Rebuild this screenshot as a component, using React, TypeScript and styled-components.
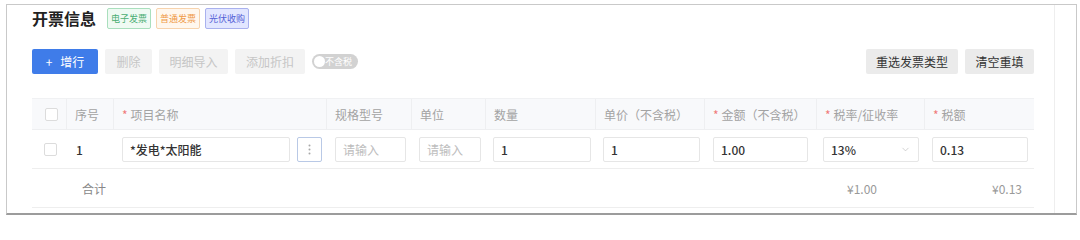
import React from "react";
import styled, { createGlobalStyle } from "styled-components";
import { ChevronDown } from "lucide-react";

const GlobalStyle = createGlobalStyle`
  html, body {
    margin: 0;
    padding: 0;
    background: #ffffff;
  }
  body {
    font-family: "Noto Sans CJK SC", "Noto Sans", sans-serif;
    color: #333333;
  }
`;

const COLUMNS = "35px 47px 213px 85px 74px 110px 109px 112px 108px 110px";

const Frame = styled.div`
  margin: 4px 3px 0 6px;
  height: 208px;
  border: 1px solid #c9c9c9;
  border-bottom: 2px solid #9c9c9c;
  background: #fff;
  overflow: hidden;
`;

const Panel = styled.div`
  width: 1048px;
  height: 100%;
  box-sizing: border-box;
  padding: 3px 20px 0 25px;
  border-right: 1px solid #eeeeee;
`;

const TitleRow = styled.div`
  display: flex;
  align-items: center;
  height: 21px;
  gap: 5px;
`;

const Title = styled.h2`
  margin: 0 6px 0 0;
  font-size: 16px;
  font-weight: 700;
  color: #222;
  line-height: 21px;
`;

const tagTones = {
  green: { bg: "#effaf3", border: "#a9dfbd", color: "#4cae74" },
  orange: { bg: "#fff7ee", border: "#f7d3ad", color: "#ef9a47" },
  blue: { bg: "#e2e6ff", border: "#a9b1ee", color: "#5561d6" },
};

const Tag = styled.span<{ $tone: keyof typeof tagTones }>`
  display: inline-flex;
  align-items: center;
  justify-content: center;
  width: 44px;
  height: 21px;
  box-sizing: border-box;
  border: 1px solid ${(p) => tagTones[p.$tone].border};
  background: ${(p) => tagTones[p.$tone].bg};
  color: ${(p) => tagTones[p.$tone].color};
  font-size: 9px;
  border-radius: 2px;
`;

const Toolbar = styled.div`
  display: flex;
  align-items: center;
  margin-top: 20px;
  height: 25px;
`;

const ToolGroup = styled.div`
  display: flex;
  align-items: center;
  gap: 7px;
`;

const Spacer = styled.div`
  flex: 1;
`;

const Button = styled.button<{ $variant: "primary" | "disabled" | "plain"; $w: number }>`
  width: ${(p) => p.$w}px;
  height: 25px;
  padding: 0;
  border: none;
  border-radius: 2px;
  font-family: inherit;
  font-size: 12px;
  display: inline-flex;
  align-items: center;
  justify-content: center;
  gap: 8px;
  background: ${(p) =>
    p.$variant === "primary" ? "#3f7ce9" : p.$variant === "disabled" ? "#f3f3f3" : "#ebebeb"};
  color: ${(p) =>
    p.$variant === "primary" ? "#ffffff" : p.$variant === "disabled" ? "#c6c6c6" : "#333333"};
`;

const Toggle = styled.div`
  position: relative;
  width: 46px;
  height: 15px;
  border-radius: 8px;
  background: #d2d2d2;
  display: flex;
  align-items: center;
  justify-content: flex-end;
  padding-right: 6px;
  box-sizing: border-box;
  color: #ffffff;
  font-size: 9px;
  margin-left: 0;
`;

const Knob = styled.span`
  position: absolute;
  left: 2px;
  top: 2px;
  width: 11px;
  height: 11px;
  border-radius: 50%;
  background: #ffffff;
`;

const Table = styled.div`
  margin-top: 24px;
`;

const HeaderRow = styled.div`
  display: grid;
  grid-template-columns: ${COLUMNS};
  height: 32px;
  background: #f8f9fb;
  border-top: 1px solid #f0f1f3;
  border-bottom: 1px solid #eeeff1;
  box-sizing: border-box;
`;

const HeadCell = styled.div`
  display: flex;
  align-items: center;
  padding-left: 8px;
  font-size: 12px;
  color: #a3a3a3;
  border-right: 1px solid #eeeff1;
  &:last-child {
    border-right: none;
  }
`;

const Star = styled.span`
  color: #f07a7a;
  margin-right: 3px;
`;

const BodyRow = styled.div<{ $h: number }>`
  display: grid;
  grid-template-columns: ${COLUMNS};
  height: ${(p) => p.$h}px;
  border-bottom: 1px solid #eeeeee;
  box-sizing: border-box;
`;

const Cell = styled.div<{ $pad?: string; $justify?: string }>`
  display: flex;
  align-items: center;
  justify-content: ${(p) => p.$justify || "flex-start"};
  gap: 7px;
  padding: ${(p) => p.$pad || "0 6px 0 7px"};
  font-size: 12px;
  color: #333;
  min-width: 0;
`;

const Check = styled.span`
  width: 11px;
  height: 11px;
  border: 1px solid #dcdcdc;
  border-radius: 2px;
  background: #fff;
  margin-left: 5px;
`;

const Index = styled.span`
  font-weight: 500;
  padding-left: 2px;
`;

const Field = styled.div<{ $placeholder?: boolean }>`
  flex: 1;
  height: 25px;
  box-sizing: border-box;
  border: 1px solid #e6e6e6;
  border-radius: 2px;
  display: flex;
  align-items: center;
  justify-content: space-between;
  padding: 0 7px;
  font-size: 12px;
  font-weight: ${(p) => (p.$placeholder ? 400 : 500)};
  color: ${(p) => (p.$placeholder ? "#bdbdbd" : "#333333")};
  min-width: 0;
`;

const MoreButton = styled.div`
  width: 25px;
  height: 25px;
  box-sizing: border-box;
  border: 1px solid #b9c9e6;
  border-radius: 2px;
  display: flex;
  align-items: center;
  justify-content: center;
  flex-shrink: 0;
`;

const Total = styled.span`
  color: #888;
  font-size: 12px;
`;

const Amount = styled.span`
  color: #999;
  font-size: 12px;
`;

function DotsIcon() {
  return (
    <svg width="3" height="11" viewBox="0 0 3 11">
      <circle cx="1.5" cy="1.5" r="1" fill="#a8a8a8" />
      <circle cx="1.5" cy="5.5" r="1" fill="#a8a8a8" />
      <circle cx="1.5" cy="9.5" r="1" fill="#a8a8a8" />
    </svg>
  );
}

export default function App() {
  return (
    <>
      <GlobalStyle />
      <Frame>
        <Panel>
          <TitleRow>
            <Title>开票信息</Title>
            <Tag $tone="green">电子发票</Tag>
            <Tag $tone="orange">普通发票</Tag>
            <Tag $tone="blue">光伏收购</Tag>
          </TitleRow>

          <Toolbar>
            <ToolGroup>
              <Button $variant="primary" $w={66}>
                <span>+</span>
                <span>增行</span>
              </Button>
              <Button $variant="disabled" $w={47}>删除</Button>
              <Button $variant="disabled" $w={69}>明细导入</Button>
              <Button $variant="disabled" $w={70}>添加折扣</Button>
              <Toggle>
                <Knob />
                不含税
              </Toggle>
            </ToolGroup>
            <Spacer />
            <ToolGroup>
              <Button $variant="plain" $w={92}>重选发票类型</Button>
              <Button $variant="plain" $w={69}>清空重填</Button>
            </ToolGroup>
          </Toolbar>

          <Table>
            <HeaderRow>
              <HeadCell>
                <Check />
              </HeadCell>
              <HeadCell>序号</HeadCell>
              <HeadCell>
                <Star>*</Star>项目名称
              </HeadCell>
              <HeadCell>规格型号</HeadCell>
              <HeadCell>单位</HeadCell>
              <HeadCell>数量</HeadCell>
              <HeadCell>单价（不含税）</HeadCell>
              <HeadCell>
                <Star>*</Star>金额（不含税）
              </HeadCell>
              <HeadCell>
                <Star>*</Star>税率/征收率
              </HeadCell>
              <HeadCell>
                <Star>*</Star>税额
              </HeadCell>
            </HeaderRow>

            <BodyRow $h={39}>
              <Cell $pad="0 0 0 7px">
                <Check />
              </Cell>
              <Cell $pad="0 0 0 7px">
                <Index>1</Index>
              </Cell>
              <Cell $pad="0 5px 0 8px">
                <Field>*发电*太阳能</Field>
                <MoreButton>
                  <DotsIcon />
                </MoreButton>
              </Cell>
              <Cell $pad="0 6px 0 8px">
                <Field $placeholder>请输入</Field>
              </Cell>
              <Cell $pad="0 5px 0 7px">
                <Field $placeholder>请输入</Field>
              </Cell>
              <Cell $pad="0 5px 0 7px">
                <Field>1</Field>
              </Cell>
              <Cell $pad="0 5px 0 7px">
                <Field>1</Field>
              </Cell>
              <Cell $pad="0 9px 0 8px">
                <Field>1.00</Field>
              </Cell>
              <Cell $pad="0 6px 0 6px">
                <Field>
                  13%
                  <ChevronDown size={11} color="#bdbdbd" strokeWidth={1.5} />
                </Field>
              </Cell>
              <Cell $pad="0 7px 0 7px">
                <Field>0.13</Field>
              </Cell>
            </BodyRow>

            <BodyRow $h={39}>
              <Cell />
              <Cell $pad="0 0 0 15px">
                <Total>合计</Total>
              </Cell>
              <Cell />
              <Cell />
              <Cell />
              <Cell />
              <Cell />
              <Cell />
              <Cell $pad="0 0 0 30px">
                <Amount>¥1.00</Amount>
              </Cell>
              <Cell $pad="0 13px 0 0" $justify="flex-end">
                <Amount>¥0.13</Amount>
              </Cell>
            </BodyRow>
          </Table>
        </Panel>
      </Frame>
    </>
  );
}
